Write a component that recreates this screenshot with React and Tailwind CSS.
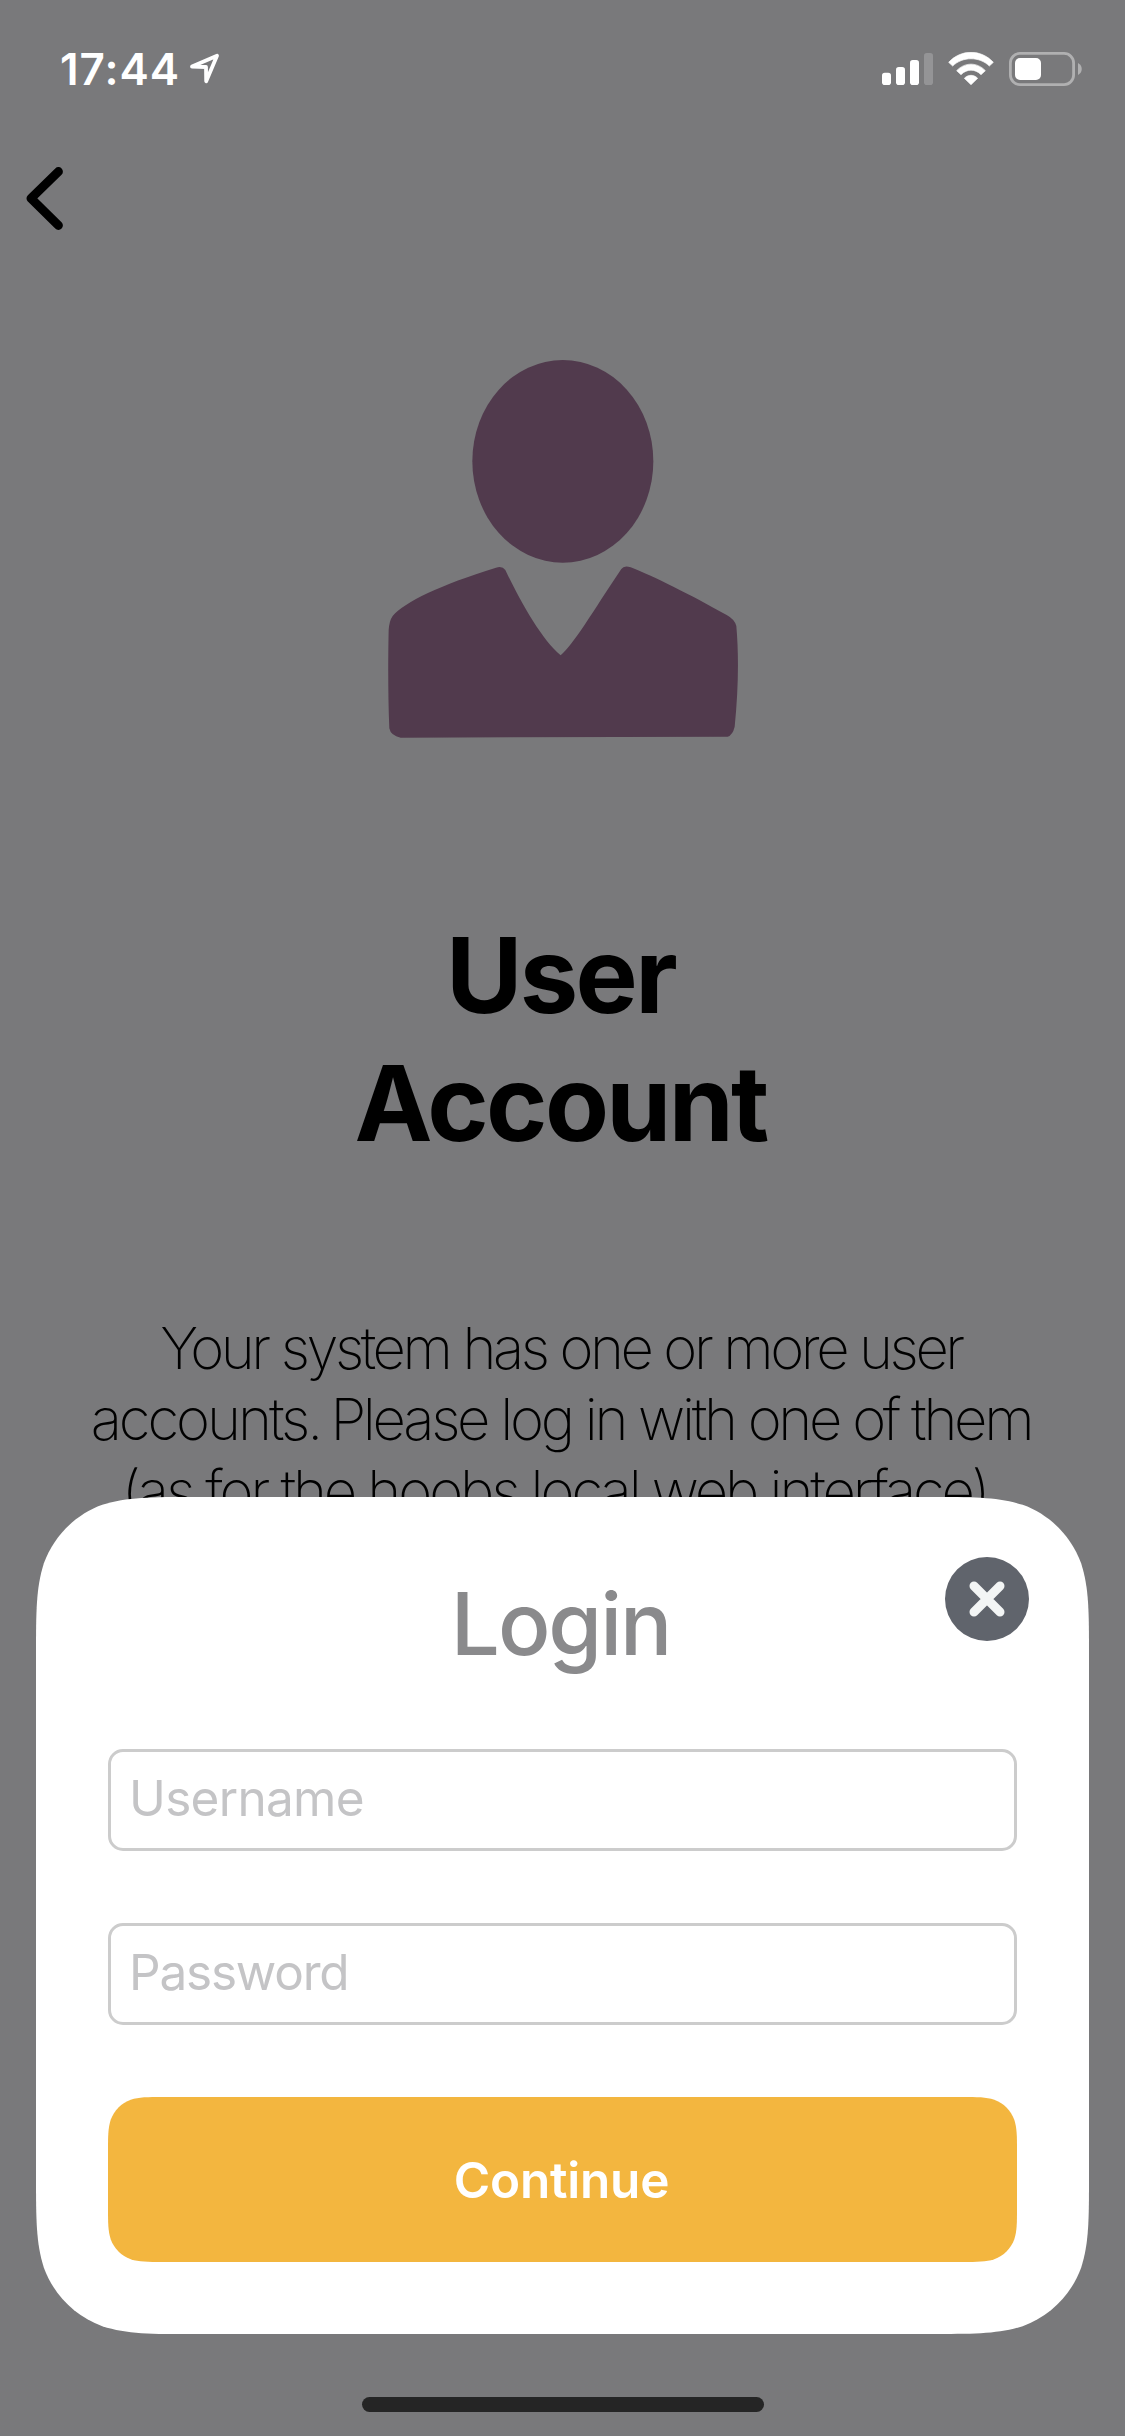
import React from "react";

// Outline of a box with smooth, continuous-curvature corners.
function smoothBox(w, h, r) {
  const a = 1.528665 * r;
  const b = 1.088493 * r;
  const c = 0.868407 * r;
  const d = 0.631494 * r;
  const e = 0.372824 * r;
  const f = 0.16906 * r;
  const g = 0.074911 * r;
  return [
    `M${a} 0`,
    `L${w - a} 0`,
    `C${w - b} 0 ${w - c} 0 ${w - d} ${g}`,
    `C${w - e} ${f} ${w - f} ${e} ${w - g} ${d}`,
    `C${w} ${c} ${w} ${b} ${w} ${a}`,
    `L${w} ${h - a}`,
    `C${w} ${h - b} ${w} ${h - c} ${w - g} ${h - d}`,
    `C${w - f} ${h - e} ${w - e} ${h - f} ${w - d} ${h - g}`,
    `C${w - c} ${h} ${w - b} ${h} ${w - a} ${h}`,
    `L${a} ${h}`,
    `C${b} ${h} ${c} ${h} ${d} ${h - g}`,
    `C${e} ${h - f} ${f} ${h - e} ${g} ${h - d}`,
    `C0 ${h - c} 0 ${h - b} 0 ${h - a}`,
    `L0 ${a}`,
    `C0 ${b} 0 ${c} ${g} ${d}`,
    `C${f} ${e} ${e} ${f} ${d} ${g}`,
    `C${c} 0 ${b} 0 ${a} 0Z`,
  ].join(" ");
}

const clip = (w, h, r) => ({ clipPath: `path("${smoothBox(w, h, r)}")` });

function StatusBar() {
  return (
    <div className="flex h-[138px] w-full shrink-0 items-center pl-[60px] text-white">
      <span className="text-[44px] leading-none font-semibold tracking-[1px]">17:44</span>
      <svg className="ml-[7px] h-[34px] w-[34px]" viewBox="188 52 34 34" fill="none" stroke="currentColor" strokeWidth="3.8" strokeLinejoin="round">
        <path d="M193 66.6 L218 55.8 L207.2 81.3 L207 67 Z" />
      </svg>
      <div className="mr-[43px] ml-auto flex items-center">
        <svg className="h-[34px] w-[51px]" viewBox="0 0 51 34" fill="currentColor">
          <rect x="0" y="20.7" width="9" height="12.3" rx="2.8" />
          <rect x="14" y="15" width="9" height="18" rx="2.8" />
          <rect x="28" y="8" width="9" height="25" rx="2.8" />
          <rect x="42" y="1" width="9" height="32" rx="2.8" fill="#949496" />
        </svg>
        <svg className="ml-[15px] h-[34px] w-[46px]" viewBox="0 0 138 102" fill="currentColor" stroke="currentColor" strokeWidth="2" strokeLinejoin="round">
          <path d="M2 31 C39 -9 99 -9 136 31 L124 42 C94 13 44 13 14 42 Z" />
          <path d="M26 56 C50 30 88 30 112 56 L99 68 C82 50 56 50 39 68 Z" />
          <path d="M49 79 C60 67 78 67 89 79 L69 98 Z" />
        </svg>
        <svg className="ml-[15px] h-[34px] w-[73px]" viewBox="0 0 73 34">
          <rect x="1.4" y="1.4" width="63.2" height="31.2" rx="9.5" fill="none" stroke="#b0b0b1" strokeWidth="2.8" />
          <rect x="6" y="6" width="26" height="22" rx="5" fill="#fff" />
          <path d="M69 11 C74 13.5 74 20.5 69 23 Z" fill="#b0b0b1" />
        </svg>
      </div>
    </div>
  );
}

function PersonIcon() {
  return (
    <svg className="h-[420px] w-[400px]" viewBox="0 0 1200 1260" fill="#513a4d">
      <ellipse cx="608.5" cy="364" rx="271.5" ry="304" />
      <path d="M86 870 Q88 842 98 828 C135 785 240 735 408 683 Q427 677 436 690 C476 775 545 900 602 946 C640 915 700 812 784 687 Q792 675 812 682 C880 708 990 764 1100 825 Q1124 838 1129 858 C1137 950 1135 1050 1124 1160 Q1118 1185 1103 1190 L122 1193 Q92 1187 88 1165 C84 1070 84 960 86 870 Z" />
    </svg>
  );
}

function Field({ type, placeholder, className }) {
  return (
    <input
      type={type}
      placeholder={placeholder}
      className={`block h-[102px] w-full rounded-[15px] border-[3px] border-[#cccccc] bg-white pb-[4px] pl-[18px] text-[49.5px] text-black outline-none placeholder:text-[#c4c4c6] placeholder:opacity-100 ${className}`}
    />
  );
}

function LoginSheet() {
  return (
    <div className="absolute bottom-[102px] left-[36px] h-[837px] w-[1053px] bg-white px-[72px]" style={clip(1053, 837, 105)}>
      <button aria-label="Close" className="absolute top-[60px] right-[60px] flex size-[84px] items-center justify-center rounded-full bg-[#60646c]">
        <svg className="size-[36px]" viewBox="0 0 36 36" stroke="#f3f5f5" strokeWidth="9" strokeLinecap="round">
          <path d="M5 5 L31 31 M31 5 L5 31" />
        </svg>
      </button>
      <h2 className="mt-[75px] pr-[4px] text-center text-[87px] leading-[104px] font-medium tracking-[-2.1px] text-[#8a8a8c]">Login</h2>
      <Field type="text" placeholder="Username" className="mt-[73px] tracking-[-0.7px]" />
      <Field type="password" placeholder="Password" className="mt-[72px] tracking-[-1.2px]" />
      <button
        className="mt-[72px] flex h-[165px] w-full items-center justify-center bg-[#f3b63f] pt-[2px] pr-[2px] text-[49.5px] font-semibold tracking-[-0.2px] text-white"
        style={clip(909, 165, 36)}
      >
        Continue
      </button>
    </div>
  );
}

export default function App() {
  return (
    <div className="relative flex h-[2436px] w-[1125px] flex-col items-center overflow-hidden bg-[#79797b] font-['Inter',sans-serif]">
      <StatusBar />
      <div className="flex h-[202px] w-full shrink-0 items-start pt-[20px] pl-[22px]">
        <svg className="h-[80px] w-[46px]" viewBox="22 158 46 80" fill="none" stroke="#000" strokeWidth="9" strokeLinecap="round" strokeLinejoin="round">
          <path d="M58.4 171.6 L31 198.4 L58.4 225.4" />
        </svg>
      </div>
      <div className="shrink-0 pr-[5px]">
        <PersonIcon />
      </div>
      <h1 className="mt-[151px] pr-[4px] text-center text-[104.5px] leading-[128px] font-bold tracking-[-2.7px] text-black">
        User
        <br />
        Account
      </h1>
      <p className="mt-[146px] pr-[3px] text-center text-[58px] leading-[71.4px] font-[150] whitespace-nowrap text-black">
        <span className="block tracking-[-3.44px]">Your system has one or more user</span>
        <span className="block tracking-[-3.3px]">
          <span className="tracking-[-3.05px]">accounts</span>
          <span className="tracking-[-4.6px]">. </span>
          Please log in with one of them
        </span>
        <span className="block tracking-[-3.1px]">(as for the hoobs local web interface).</span>
      </p>
      <LoginSheet />
      <div className="mt-auto mb-[24px] h-[15px] w-[402px] shrink-0 rounded-full bg-[#252525]" />
    </div>
  );
}
